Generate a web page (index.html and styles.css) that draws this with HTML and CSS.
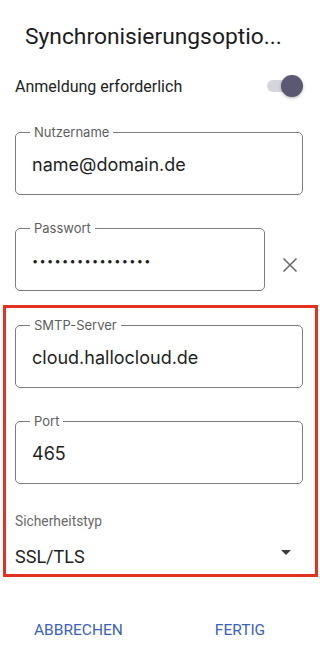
FILE: index.html
```html
<!DOCTYPE html>
<html lang="de">
<head>
    <meta charset="UTF-8">
    <meta name="viewport" content="width=device-width, initial-scale=1.0">
    <title>Synchronisierungsoptionen</title>
    <link rel="stylesheet" href="styles.css">
</head>
<body>

<div class="dialog">
    <h2 class="dialog-title">Synchronisierungsoptio...</h2>

    <div class="switch-row">
        <span>Anmeldung erforderlich</span>
        <span class="switch"><span class="switch-thumb"></span></span>
    </div>

    <div class="field-row">
        <fieldset class="field">
            <legend>Nutzername</legend>
            <div class="field-value">name@domain.de</div>
        </fieldset>
    </div>

    <div class="field-row">
        <fieldset class="field field-short">
            <legend>Passwort</legend>
            <div class="field-value dots">&bull;&bull;&bull;&bull;&bull;&bull;&bull;&bull;&bull;&bull;&bull;&bull;&bull;&bull;&bull;&bull;</div>
        </fieldset>
        <svg class="clear-icon" width="16" height="16" viewBox="0 0 16 16">
            <path d="M1.5 1.5 L14.5 14.5 M14.5 1.5 L1.5 14.5" stroke="#6b6b6b" stroke-width="1.6" fill="none"/>
        </svg>
    </div>

    <!-- highlighted server settings -->
    <div class="server-box">
        <div class="field-row">
            <fieldset class="field">
                <legend>SMTP-Server</legend>
                <div class="field-value">cloud.hallocloud.de</div>
            </fieldset>
        </div>

        <div class="field-row">
            <fieldset class="field">
                <legend>Port</legend>
                <div class="field-value">465</div>
            </fieldset>
        </div>

        <div class="select-label">Sicherheitstyp</div>
        <div class="select-row">
            <span>SSL/TLS</span>
            <span class="select-arrow"></span>
        </div>
    </div>

    <div class="actions">
        <button type="button" class="action-btn">ABBRECHEN</button>
        <button type="button" class="action-btn">FERTIG</button>
    </div>
</div>

</body>
</html>
```

FILE: styles.css
```css
* {
    margin: 0;
    padding: 0;
    box-sizing: border-box;
}

body {
    font-family: Roboto, "Liberation Sans", sans-serif;
    background-color: #ffffff;
    color: #1f1f1f;
    width: 320px;
}

.dialog {
    padding-top: 23px;
}

.dialog-title {
    font-size: 22.8px;
    font-weight: 400;
    line-height: 28px;
    padding-left: 25px;
    color: #1c1b1f;
}

.switch-row {
    display: flex;
    justify-content: space-between;
    align-items: center;
    height: 30px;
    margin-top: 20px;
    padding: 0 20px 0 15px;
    font-size: 16px;
    color: #222;
}

.switch {
    position: relative;
    width: 33px;
    height: 12px;
    border-radius: 6px;
    background-color: #d6d5dc;
}

.switch-thumb {
    position: absolute;
    right: -3px;
    top: -5px;
    width: 22px;
    height: 22px;
    border-radius: 50%;
    background-color: #5b5872;
    box-shadow: 0 1px 3px rgba(0, 0, 0, 0.3);
}

.field-row {
    display: flex;
    align-items: center;
    padding: 0 17px 0 15px;
    margin-top: 26px;
}

.switch-row + .field-row {
    margin-top: 24px;
}

.field {
    flex: 1;
    border: 1px solid #7d7d7d;
    border-radius: 5px;
    padding: 0 16px;
    font-family: Inter, "Liberation Sans", sans-serif;
}

.field-short {
    flex: none;
    width: 250px;
}

.field legend {
    font-size: 13px;
    line-height: 14px;
    padding: 0 4px;
    margin-left: -2px;
    color: #5e5e5e;
}

.field-value {
    font-size: 18px;
    line-height: 24px;
    padding: 14px 0 17px;
    color: #1f1f1f;
}

.dots {
    font-size: 11px;
    letter-spacing: 1.3px;
}

.clear-icon {
    margin-left: 17px;
    margin-top: 18px;
}

.server-box {
    margin: 14px 2px 0 3px;
    border: 3px solid #e3321f;
    padding-bottom: 6px;
}

.server-box .field-row {
    padding: 0 12px 0 9px;
}

.server-box .field-row:first-child {
    margin-top: 10px;
}

.select-label {
    margin-top: 29px;
    padding-left: 9px;
    font-size: 13.8px;
    line-height: 16px;
    color: #6a6a6a;
}

.select-row {
    display: flex;
    justify-content: space-between;
    align-items: center;
    height: 22px;
    margin-top: 17px;
    padding: 0 24px 0 9px;
    font-size: 18px;
    line-height: 22px;
    color: #1f1f1f;
}

.select-arrow {
    width: 0;
    height: 0;
    margin-bottom: 10px;
    border-left: 5px solid transparent;
    border-right: 5px solid transparent;
    border-top: 5px solid #3d3d45;
}

.actions {
    display: flex;
    padding-top: 43px;
}

.action-btn {
    background: none;
    border: none;
    padding: 0;
    font-family: Roboto, "Liberation Sans", sans-serif;
    font-size: 15.5px;
    line-height: 20px;
    color: #3b62c2;
    cursor: pointer;
}

.action-btn:first-child {
    margin-left: 34px;
}

.action-btn:last-child {
    margin-left: 92px;
}
```
